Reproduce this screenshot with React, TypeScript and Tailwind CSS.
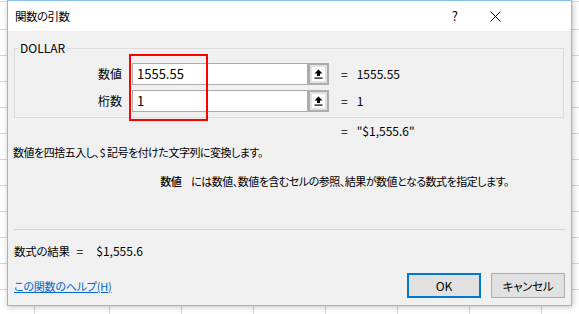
import React from 'react';

function RefButton() {
  return (
    <div className="w-[21px] h-[22px] border-2 border-[#adadad] bg-[#e1e1e1] flex items-center justify-center">
      <div className="w-[13px] h-[14px] bg-white flex items-center justify-center">
        <svg width="9" height="10" viewBox="0 0 9 10">
          <path d="M4.5 0.5 L8.5 4.5 L6 4.5 L6 7 L3 7 L3 4.5 L0.5 4.5 Z" fill="#000" />
          <rect x="0.5" y="8.5" width="8" height="1.2" fill="#000" />
        </svg>
      </div>
    </div>
  );
}

function ArgRow({ label, value }: { label: string; value: string }) {
  return (
    <div className="flex items-center h-[22px]">
      <div className="w-[107px] text-right text-[12px]">{label}</div>
      <div className="ml-[10px] w-[176px] h-[22px] border border-[#a9a9a9] bg-white pl-[4px] flex items-center text-[13px]">
        {value}
      </div>
      <RefButton />
      <span className="ml-[12px]">=</span>
      <span className="ml-[9px]">{value}</span>
    </div>
  );
}

export default function App() {
  return (
    <div className="relative w-[579px] h-[314px] overflow-hidden bg-white bg-[repeating-linear-gradient(to_bottom,transparent_0,transparent_25px,#d6d6d6_25px,#d6d6d6_26px),repeating-linear-gradient(to_right,transparent_0,transparent_71px,#d6d6d6_71px,#d6d6d6_72px)] bg-[position:38px_4px] font-['Noto_Sans_CJK_JP',sans-serif] [font-feature-settings:'palt'] text-[12px] leading-[16px] text-black">
      {/* dialog */}
      <div className="absolute left-[7px] top-0 w-[565px] h-[306px] border border-[#86bde9] bg-[#f0f0f0] shadow-[1px_1px_6px_rgba(0,0,0,0.25)] flex flex-col">
        <div className="h-[30px] bg-white flex items-center pl-[7px]">
          <span className="text-[11.5px] tracking-[-0.5px]">関数の引数</span>
          <span className="ml-auto mr-[32px] text-[13px]">?</span>
          <svg className="mr-[70px]" width="11" height="11" viewBox="0 0 11 11">
            <path d="M0.5 0.5 L10.5 10.5 M10.5 0.5 L0.5 10.5" stroke="#000" strokeWidth="1" />
          </svg>
        </div>

        <div className="flex flex-col px-[6px]">
          <fieldset className="mt-[10px] w-[550px] border border-[#dcdcdc] pt-[8px] pb-[5px]">
            <legend className="ml-[4px] px-[1px] leading-[14px]">DOLLAR</legend>
            <div className="flex flex-col gap-[5px]">
              <ArgRow label="数値" value="1555.55" />
              <ArgRow label="桁数" value="1" />
            </div>
          </fieldset>

          <div className="mt-[5px] ml-[327px]">
            =<span className="ml-[9px]">"$1,555.6"</span>
          </div>
          <div className="mt-[5px] -ml-px text-[11px] tracking-[-0.5px]">
            数値を四捨五入し、$ 記号を付けた文字列に変換します。
          </div>
          <div className="mt-[13px] pr-[56px] flex justify-end text-[11px] tracking-[-0.5px]">
            <span className="font-medium">数値</span>
            <span className="ml-[10px]">には数値、数値を含むセルの参照、結果が数値となる数式を指定します。</span>
          </div>

          <div className="mt-[40px] h-px bg-[#d7d7d7]" />

          <div className="mt-[13px] flex items-baseline">
            <span className="text-[11.5px] tracking-[-0.3px]">数式の結果</span>
            <span className="ml-[7px]">=</span>
            <span className="ml-[13px]">$1,555.6</span>
          </div>

          <div className="mt-[14px] flex items-center">
            <a className="text-[#0066cc] underline text-[11px] tracking-[-0.2px]">この関数のヘルプ(H)</a>
            <button className="ml-auto w-[74px] h-[25px] border-2 border-[#0078d7] bg-[#e1e1e1] text-[12px]">
              OK
            </button>
            <button className="ml-[10px] w-[74px] h-[25px] border border-[#adadad] bg-[#e1e1e1] text-[11.5px] tracking-[-0.3px]">
              キャンセル
            </button>
          </div>
        </div>
      </div>

      {/* red annotation box */}
      <div className="absolute left-[129px] top-[54px] w-[79px] h-[67px] border-2 border-[#ff0000]" />
    </div>
  );
}
